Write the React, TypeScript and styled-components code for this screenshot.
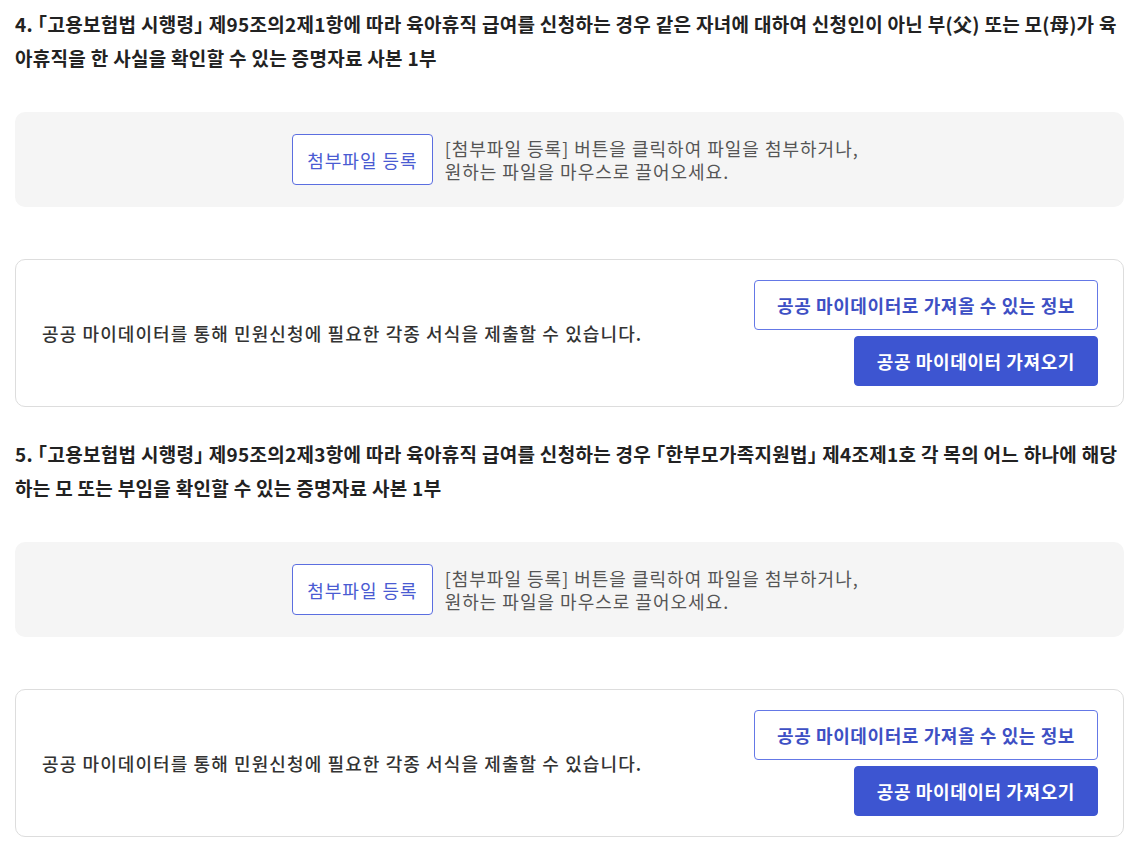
import React from "react";
import styled, { createGlobalStyle } from "styled-components";

const GlobalStyle = createGlobalStyle`
  html, body {
    margin: 0;
    padding: 0;
    background: #ffffff;
  }
  body {
    font-family: "Noto Sans CJK KR", "Noto Sans", sans-serif;
    color: #222;
  }
  * { box-sizing: border-box; }
`;

const Page = styled.div`
  padding: 7px 8px 20px 15px;
  display: flex;
  flex-direction: column;
`;

const Section = styled.section`
  display: flex;
  flex-direction: column;
  & + & {
    margin-top: 30px;
  }
`;

const Title = styled.h3`
  margin: 0 0 37px 0;
  font-size: 19px;
  font-weight: 700;
  line-height: 34px;
  color: #222;
  letter-spacing: 0.3px;
  word-break: break-all;
  font-feature-settings: "halt";
`;

const DropZone = styled.div`
  height: 95px;
  padding-left: 12px;
  background: #f5f5f5;
  border-radius: 10px;
  display: flex;
  align-items: center;
  justify-content: center;
  gap: 12px;
`;

const AttachButton = styled.button`
  height: 51px;
  padding: 0 14px;
  background: #ffffff;
  border: 1px solid #5b6ee0;
  border-radius: 4px;
  font-family: inherit;
  font-size: 18px;
  letter-spacing: 1px;
  color: #4a5bd2;
  cursor: pointer;
`;

const DropHint = styled.p`
  margin: 0;
  font-size: 18px;
  line-height: 23px;
  letter-spacing: 1px;
  color: #555;
`;

const MyDataBox = styled.div`
  margin-top: 52px;
  border: 1px solid #dddddd;
  border-radius: 10px;
  padding: 20px 25px 20px 26px;
  display: flex;
  align-items: center;
  justify-content: space-between;
`;

const MyDataText = styled.p`
  margin: 0;
  font-size: 18px;
  font-weight: 500;
  letter-spacing: 1.1px;
  color: #333;
`;

const ButtonColumn = styled.div`
  display: flex;
  flex-direction: column;
  align-items: flex-end;
  gap: 6px;
`;

const ActionButton = styled.button<{ $primary?: boolean }>`
  height: 50px;
  padding: 0 22px;
  border-radius: 4px;
  font-family: inherit;
  font-size: 18px;
  font-weight: 600;
  letter-spacing: 0.6px;
  cursor: pointer;
  border: 1px solid ${(p) => (p.$primary ? "#3d55d1" : "#6478e6")};
  background: ${(p) => (p.$primary ? "#3d55d1" : "#ffffff")};
  color: ${(p) => (p.$primary ? "#ffffff" : "#3e50c4")};
`;

const items = [
  {
    title:
      "4. 「고용보험법 시행령」 제95조의2제1항에 따라 육아휴직 급여를 신청하는 경우 같은 자녀에 대하여 신청인이 아닌 부(父) 또는 모(母)가 육아휴직을 한 사실을 확인할 수 있는 증명자료 사본 1부",
  },
  {
    title:
      "5. 「고용보험법 시행령」 제95조의2제3항에 따라 육아휴직 급여를 신청하는 경우 「한부모가족지원법」 제4조제1호 각 목의 어느 하나에 해당하는 모 또는 부임을 확인할 수 있는 증명자료 사본 1부",
  },
];

export default function App() {
  return (
    <>
      <GlobalStyle />
      <Page>
        {items.map((item, i) => (
          <Section key={i}>
            <Title>{item.title}</Title>
            <DropZone>
              <AttachButton type="button">첨부파일 등록</AttachButton>
              <DropHint>
                [첨부파일 등록] 버튼을 클릭하여 파일을 첨부하거나,
                <br />
                원하는 파일을 마우스로 끌어오세요.
              </DropHint>
            </DropZone>
            <MyDataBox>
              <MyDataText>
                공공 마이데이터를 통해 민원신청에 필요한 각종 서식을 제출할 수 있습니다.
              </MyDataText>
              <ButtonColumn>
                <ActionButton type="button">공공 마이데이터로 가져올 수 있는 정보</ActionButton>
                <ActionButton type="button" $primary>
                  공공 마이데이터 가져오기
                </ActionButton>
              </ButtonColumn>
            </MyDataBox>
          </Section>
        ))}
      </Page>
    </>
  );
}
